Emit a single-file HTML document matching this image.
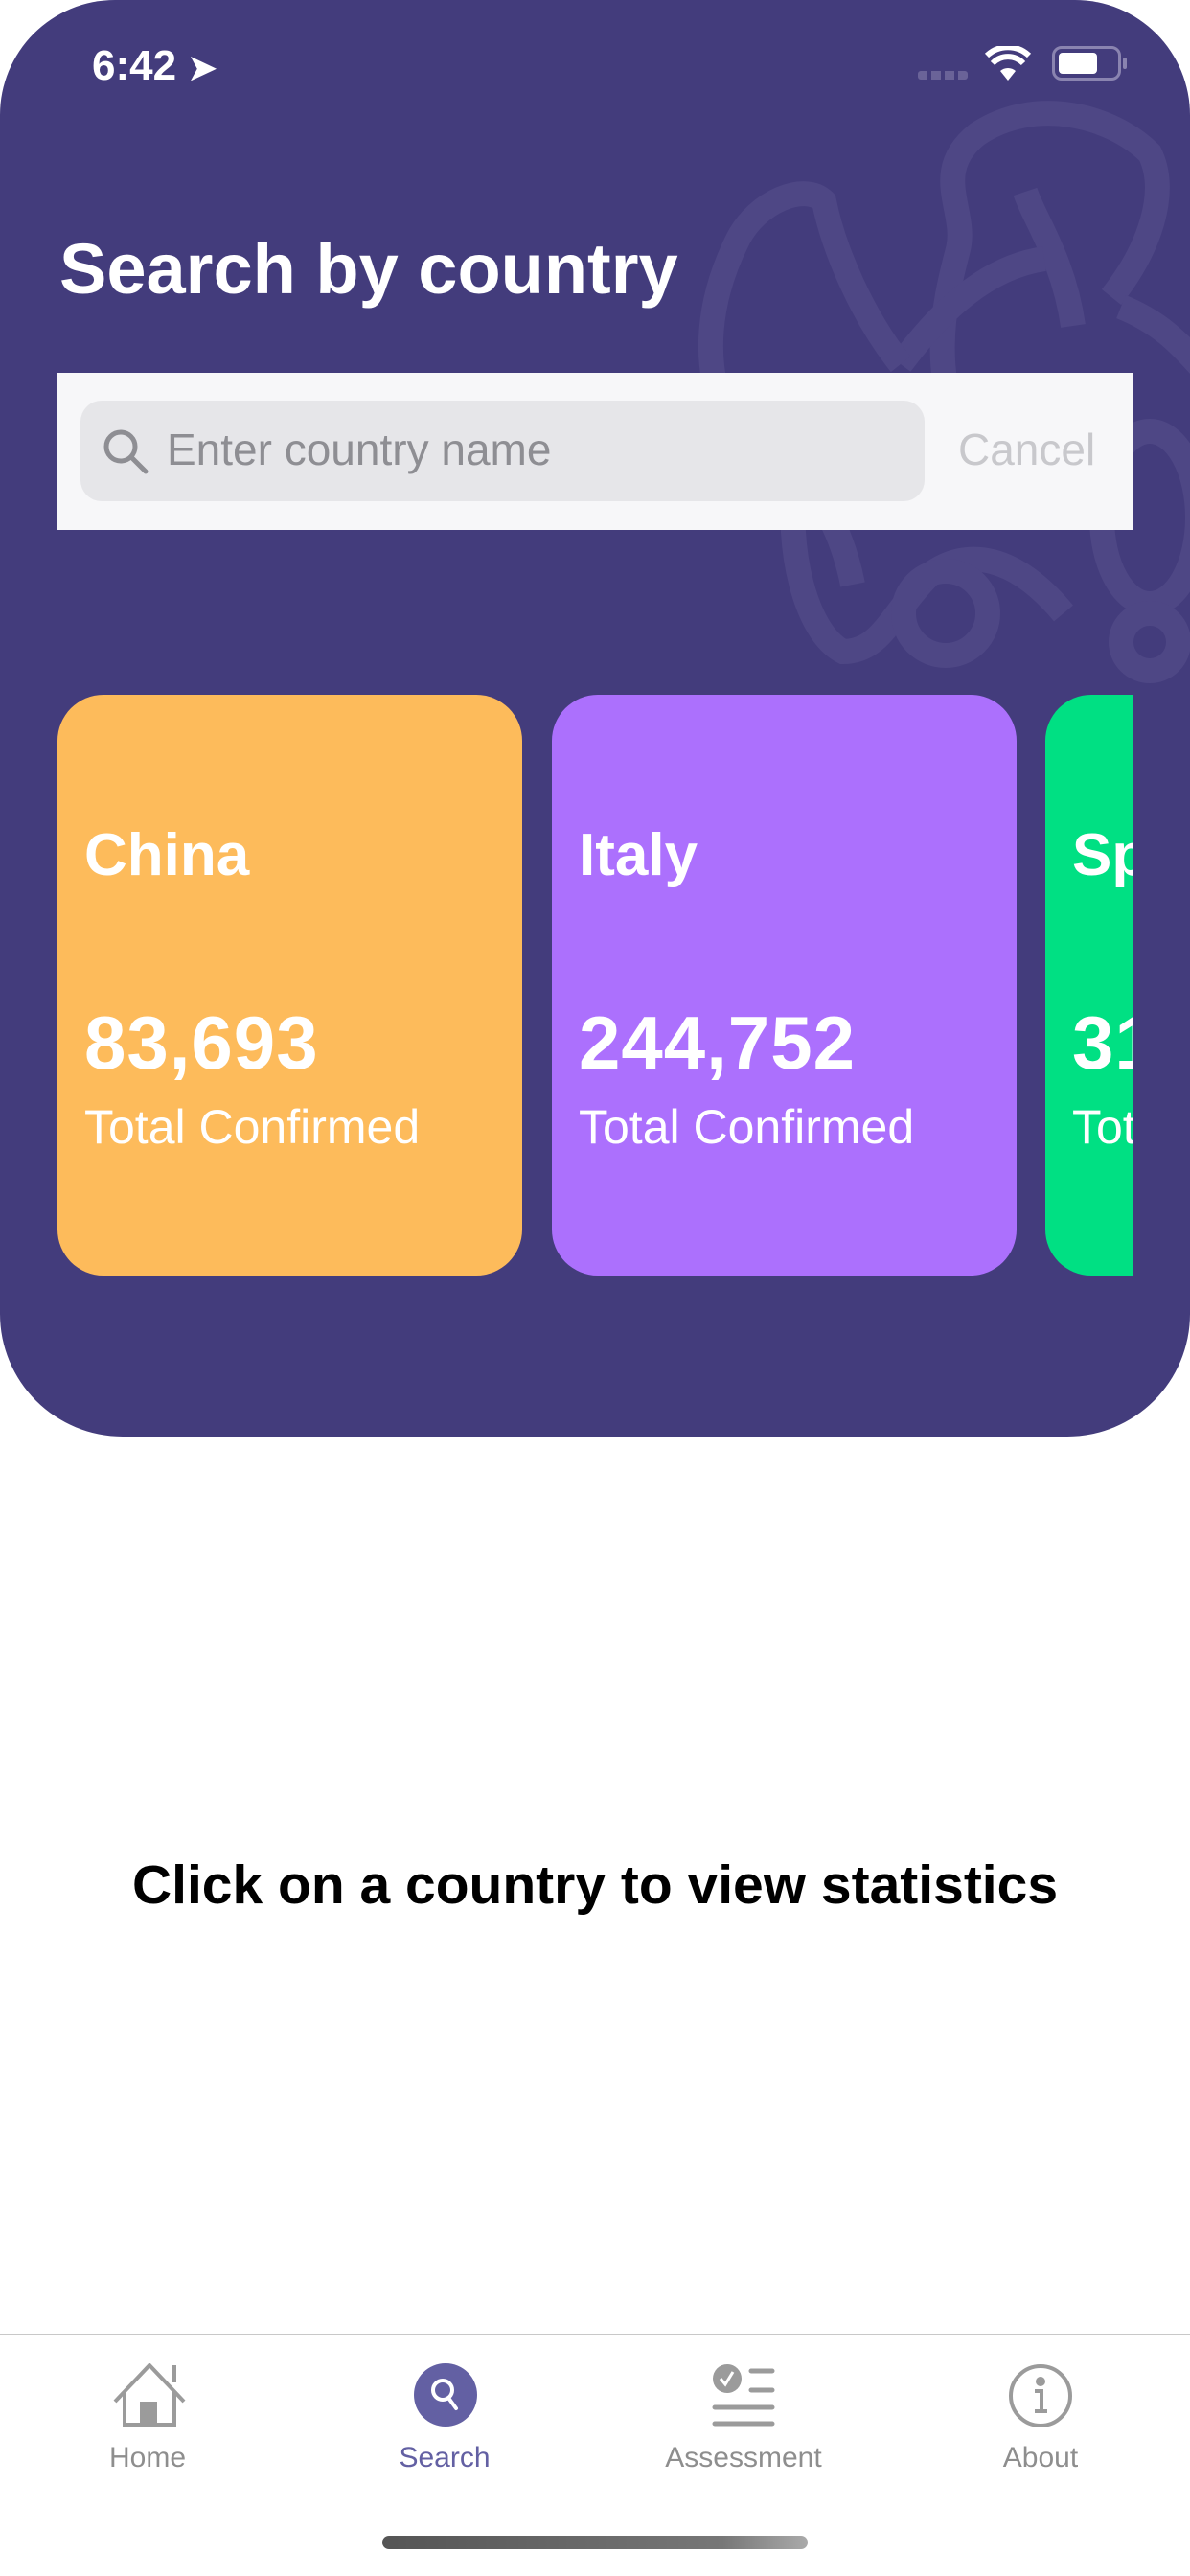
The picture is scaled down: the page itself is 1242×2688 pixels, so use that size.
<!DOCTYPE html>
<html><head><meta charset="utf-8"><style>
*{margin:0;padding:0;box-sizing:border-box}
body{width:1242px;height:2688px;background:#fff;font-family:"Liberation Sans",sans-serif;position:relative;overflow:hidden}
.hdr{position:absolute;left:0;top:0;width:1242px;height:1499px;background:#433C7C;border-radius:120px 120px 128px 128px;overflow:hidden}
.abs{position:absolute}
.card{position:absolute;top:725px;height:606px;border-radius:48px;color:#fff;overflow:hidden}
.card .n{position:absolute;left:28px;top:132px;font-size:62px;font-weight:bold}
.card .c{position:absolute;left:28px;top:318px;font-size:78px;font-weight:bold;letter-spacing:1px}
.card .t{position:absolute;left:28px;top:422px;font-size:50px}
.tab{position:absolute;top:2548px;width:300px;text-align:center;font-size:30px;color:#8e8e8e}
</style></head><body>
<div class="hdr">
<svg class="abs" style="left:640px;top:100px" width="602" height="620" viewBox="0 0 602 620" fill="none" stroke="#4E4785" stroke-width="26">
<path d="M380 380 C320 300 350 200 360 160 C370 120 330 80 380 40 C440 0 520 20 560 60 C580 100 560 160 520 210"/>
<path d="M480 240 C470 170 440 130 430 100"/>
<path d="M300 280 C330 240 380 180 450 170"/>
<path d="M300 280 C260 230 230 160 220 110 C200 90 150 110 130 150 C100 210 90 280 120 340 C140 380 170 370 190 390 C220 420 240 460 250 510"/>
<path d="M470 540 C420 480 370 470 330 500 C290 540 280 580 240 580 C200 560 180 470 190 400"/>
<path d="M530 220 C580 240 600 270 620 290"/>
<circle cx="347" cy="540" r="44"/>
<ellipse cx="560" cy="440" rx="50" ry="90"/>
<circle cx="560" cy="570" r="30"/>
</svg>
<div class="abs" style="left:96px;top:44px;font-size:44px;font-weight:bold;color:#fff">6:42 <span style="font-size:36px">➤</span></div>
<div class="abs" style="left:958px;top:74px;width:52px;height:9px;background:repeating-linear-gradient(90deg,#6a6398 0 10px,transparent 10px 14px);border-radius:3px"></div>
<svg class="abs" style="left:1028px;top:48px" width="48" height="38" viewBox="0 0 48 38"><path d="M24 36 L16 26 A12 12 0 0 1 32 26Z" fill="#fff"/><path d="M8 18 A22 22 0 0 1 40 18" stroke="#fff" stroke-width="6" fill="none"/><path d="M2 10 A32 32 0 0 1 46 10" stroke="#fff" stroke-width="6" fill="none"/></svg>
<div class="abs" style="left:1098px;top:48px;width:72px;height:36px;border:3px solid #8a84b0;border-radius:10px;padding:4px"><div style="width:40px;height:100%;background:#fff;border-radius:4px"></div></div>
<div class="abs" style="left:1172px;top:60px;width:4px;height:12px;background:#8a84b0;border-radius:2px"></div>
<div class="abs" style="left:62px;top:238px;font-size:74px;font-weight:bold;color:#fff">Search by country</div>
<div class="abs" style="left:60px;top:389px;width:1122px;height:164px;background:#F7F7F9"></div>
<div class="abs" style="left:84px;top:418px;width:881px;height:105px;background:#E6E6E9;border-radius:22px"></div>
<svg class="abs" style="left:106px;top:446px" width="50" height="50" viewBox="0 0 50 50" fill="none" stroke="#8e8e93" stroke-width="5"><circle cx="20" cy="20" r="15"/><path d="M31 31 L46 46" stroke-linecap="round"/></svg>
<div class="abs" style="left:174px;top:442px;font-size:46px;color:#8e8e93">Enter country name</div>
<div class="abs" style="left:1000px;top:442px;font-size:46px;color:#c8c8cc">Cancel</div>
<div class="card" style="left:60px;width:485px;background:#FDBB5B"><div class="n">China</div><div class="c">83,693</div><div class="t">Total Confirmed</div></div>
<div class="card" style="left:576px;width:485px;background:#AC70FD"><div class="n">Italy</div><div class="c">244,752</div><div class="t">Total Confirmed</div></div>
<div class="abs" style="left:1091px;top:725px;width:91px;height:606px;overflow:hidden"><div class="card" style="left:0;top:0;width:485px;background:#00E083;border-radius:48px"><div class="n">Spain</div><div class="c">31</div><div class="t">Total</div></div></div>
</div>
<div class="abs" style="left:0;width:1242px;top:1934px;text-align:center;font-size:57px;font-weight:bold;color:#000">Click on a country to view statistics</div>
<div class="abs" style="left:0;top:2435px;width:1242px;height:2px;background:#c8c8c8"></div>
<svg class="abs" style="left:118px;top:2466px" width="76" height="66" viewBox="0 0 76 66" fill="none" stroke="#9b9b9b" stroke-width="4"><path d="M2 40 L38 2 L74 40"/><path d="M12 30 V64 H64 V30"/><path d="M64 20 V2"/><rect x="28" y="40" width="18" height="24" fill="#9b9b9b" stroke="none"/></svg>
<svg class="abs" style="left:432px;top:2466px" width="66" height="66" viewBox="0 0 66 66"><circle cx="33" cy="33" r="33" fill="#6360A3"/><circle cx="30" cy="28" r="10" fill="none" stroke="#fff" stroke-width="4"/><path d="M36 36 L44 47" stroke="#fff" stroke-width="4" stroke-linecap="round"/></svg>
<svg class="abs" style="left:742px;top:2466px" width="68" height="66" viewBox="0 0 68 66"><circle cx="17" cy="16" r="15" fill="#9b9b9b"/><path d="M10 16 L15 22 L23 9" stroke="#fff" stroke-width="3" fill="none"/><g stroke="#9b9b9b" stroke-width="5" stroke-linecap="round"><path d="M42 8 H64 M42 28 H64 M4 46 H64 M4 63 H64"/></g></svg>
<svg class="abs" style="left:1052px;top:2466px" width="68" height="68" viewBox="0 0 68 68" fill="none" stroke="#9b9b9b" stroke-width="4"><circle cx="34" cy="34" r="31"/><circle cx="34" cy="19" r="3" fill="#9b9b9b"/><path d="M28 29 H35 V50 M28 50 H41"/></svg>
<div class="tab" style="left:4px">Home</div>
<div class="tab" style="left:314px;color:#6360A3">Search</div>
<div class="tab" style="left:626px">Assessment</div>
<div class="tab" style="left:936px">About</div>
<div class="abs" style="left:399px;top:2646px;width:444px;height:14px;border-radius:7px;background:linear-gradient(90deg,#555,#777 80%,#aaa)"></div>
</body></html>
